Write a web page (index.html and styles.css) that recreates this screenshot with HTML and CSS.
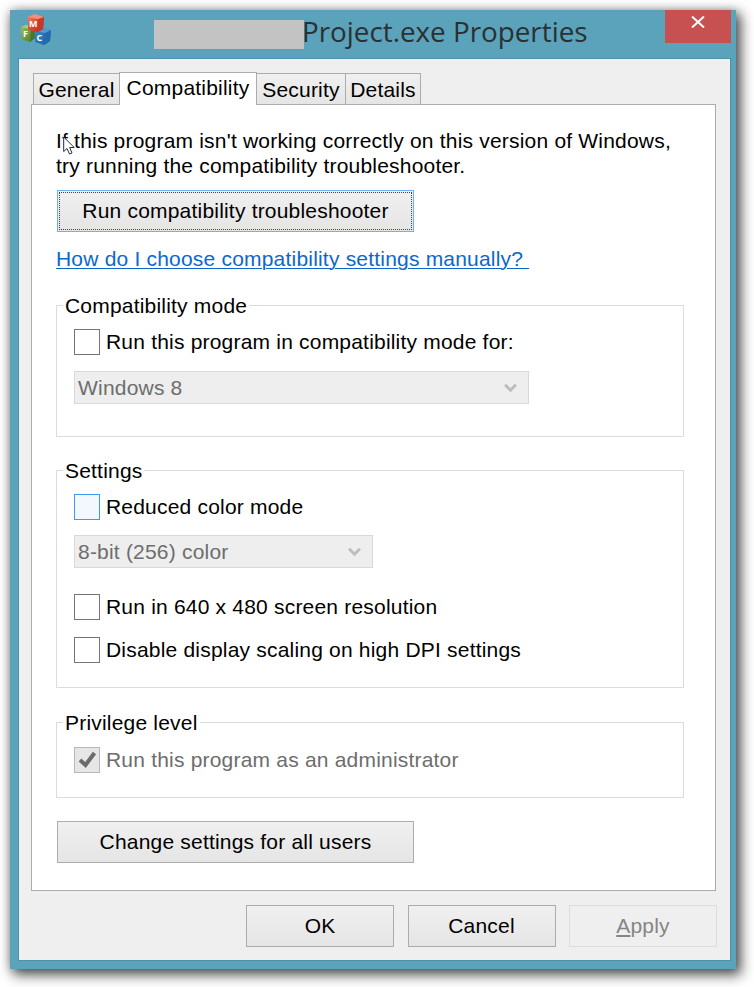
FILE: index.html
```html
<!DOCTYPE html>
<html lang="en">
<head>
<meta charset="utf-8">
<title>Project.exe Properties</title>
<link rel="stylesheet" href="styles.css">
</head>
<body>
<div class="window">
  <header class="titlebar">
    <svg class="app-icon" viewBox="0 0 32 33">
      <defs>
        <linearGradient id="red" x2="1" y2="1"><stop offset="0" stop-color="#ef8a68"/><stop offset=".5" stop-color="#d94a34"/><stop offset="1" stop-color="#b81f17"/></linearGradient>
        <linearGradient id="green" x2="1" y2="1"><stop offset="0" stop-color="#9dc064"/><stop offset="1" stop-color="#477526"/></linearGradient>
        <linearGradient id="blue" x2="1" y2="1"><stop offset="0" stop-color="#3f8dca"/><stop offset="1" stop-color="#155b9f"/></linearGradient>
      </defs>
      <path fill="url(#green)" d="M1 14L6 12L15 13V25L10 29L1 26Z"/>
      <path fill="#4b7829" d="M11 16L15 14V25L10 29Z"/>
      <path fill="#adc97b" d="M1 14L6 12L15 13L11 16Z"/>
      <path fill="url(#blue)" d="M15 18L22 15L31 17L30 28L24 32L15 29Z"/>
      <path fill="#1f6bae" d="M25 20L31 17L30 28L24 32Z"/>
      <path fill="#5098d0" d="M15 18L22 15L31 17L25 20Z"/>
      <path fill="url(#red)" d="M8 4L15 1L24 4L23 16L18 19L8 17Z"/>
      <path fill="#c8382a" d="M18 6L24 4L23 16L18 19Z"/>
      <path fill="#ef9278" d="M8 4L15 1L24 4L18 6Z"/>
      <g class="app-letters"><text x="9" y="14">M</text><text x="3" y="24">F</text><text x="16.5" y="28">C</text></g>
    </svg>
    <span class="redacted"></span>
    <h1 class="title">Project.exe Properties</h1>
    <button class="close" aria-label="Close"><svg viewBox="0 0 14 12"><path d="M1 .5L13 11.5M13 .5L1 11.5"/></svg></button>
  </header>
  <main class="client">
    <nav class="tabs">
      <span class="tab general">General</span>
      <span class="tab active">Compatibility</span>
      <span class="tab security">Security</span>
      <span class="tab details">Details</span>
    </nav>
    <section class="panel">
      <p class="intro">If this program isn't working correctly on this version of Windows,<br>try running the compatibility troubleshooter.</p>
      <button class="button wide focused">Run compatibility troubleshooter</button>
      <a class="link">How do I choose compatibility settings manually?&nbsp;</a>
      <fieldset class="group mode">
        <legend>Compatibility mode</legend>
        <label class="check"><i class="box"></i>Run this program in compatibility mode for:</label>
        <div class="select os">Windows 8<svg viewBox="0 0 12 9"><path d="M1 1.5L6 6.5L11 1.5"/></svg></div>
      </fieldset>
      <fieldset class="group settings">
        <legend>Settings</legend>
        <label class="check"><i class="box hover"></i>Reduced color mode</label>
        <div class="select color">8-bit (256) color<svg viewBox="0 0 12 9"><path d="M1 1.5L6 6.5L11 1.5"/></svg></div>
        <label class="check resolution"><i class="box"></i>Run in 640 x 480 screen resolution</label>
        <label class="check scaling"><i class="box"></i>Disable display scaling on high DPI settings</label>
      </fieldset>
      <fieldset class="group privilege">
        <legend>Privilege level</legend>
        <label class="check disabled"><i class="box"><svg viewBox="0 0 24 24"><path d="M5 12L10.5 17L19.5 5"/></svg></i>Run this program as an administrator</label>
      </fieldset>
      <button class="button wide all-users">Change settings for all users</button>
    </section>
    <footer class="actions">
      <button class="button">OK</button>
      <button class="button">Cancel</button>
      <button class="button inactive" disabled><u>A</u>pply</button>
    </footer>
  </main>
  <svg class="cursor" viewBox="0 0 12 19"><path d="M.7 1V15.5L4 12.5L6.5 18L9 17L6.7 11.5H11.2Z"/></svg>
</div>
</body>
</html>
```
FILE: styles.css
```css
* { box-sizing: border-box; }
body {
  margin: 0;
  padding: 10px;
  height: 987px;
  overflow: hidden;
  background: #fff;
  color: #000;
  font: 21px/25px "Liberation Sans", Arial, sans-serif;
  letter-spacing: .2px;
}
.window {
  position: relative;
  width: 726px;
  height: 959px;
  padding: 0 5px 8px 8px;
  background: #5ba2bb;
  box-shadow: 4px 5px 12px 1px rgba(0, 0, 0, .65), 0 0 9px rgba(0, 0, 0, .25);
}
.titlebar { display: flex; height: 48px; align-items: flex-start; }
.app-icon { width: 32px; height: 33px; margin: 3px 0 0 2px; }
.app-letters { fill: #fff; font: bold 9px "Open Sans", sans-serif; letter-spacing: 0; }
.redacted { width: 150px; height: 29px; margin: 10px 0 0 102px; background: #c3c3c3; }
.title {
  flex: 1;
  margin: 4px 0 0 -2px;
  color: #2b3033;
  font: 27.8px/34px "Open Sans", sans-serif;
  letter-spacing: 0;
  white-space: nowrap;
}
.close { width: 66px; height: 33px; padding: 0; border: 0; background: #c75050; line-height: 0; }
.close svg { width: 14px; height: 12px; margin-bottom: 9px; }
.close path { fill: none; stroke: #fff; stroke-width: 2; }
.client { height: 903px; padding: 13px 14px 0 12px; border: 1px solid #4f91a8; background: #efefef; }
.tabs { display: flex; align-items: flex-end; height: 32px; padding-left: 2px; }
.tab {
  height: 31px;
  padding-top: 3px;
  border: 1px solid #acacac;
  border-bottom: 0;
  background: linear-gradient(#f0f0f0, #e5e5e5);
  text-align: center;
  white-space: nowrap;
}
.general { width: 87px; }
.tab.active { z-index: 1; width: 138px; height: 33px; margin: 0 -1px -1px; padding-top: 2px; background: #fff; }
.security { width: 90px; }
.details { width: 76px; margin-left: -1px; }
.panel {
  display: flex;
  flex-direction: column;
  align-items: flex-start;
  height: 787px;
  padding: 23px 31px 0 24px;
  border: 1px solid #acacac;
  background: #fff;
}
.intro { margin: 0; white-space: nowrap; }
.button {
  width: 148px;
  height: 42px;
  padding: 0 0 2px;
  border: 1px solid #acacac;
  background: linear-gradient(#f0f0f0, #e5e5e5);
  color: #000;
  font: inherit;
  letter-spacing: inherit;
}
.wide { width: 357px; margin-left: 1px; }
.focused { margin-top: 12px; border-color: #6fb0f5; outline: 1px dotted #444; outline-offset: -3px; }
.link { margin-top: 14px; color: #0a68cd; text-decoration: underline; text-decoration-thickness: 1px; text-underline-offset: 2px; white-space: pre; }
.group { width: 628px; margin: 0; padding: 0 0 0 17px; border: 1px solid #dcdcdc; }
.group legend { height: 25px; margin-left: -11px; padding: 0 2px; }
.mode { height: 144px; margin-top: 22px; }
.settings { height: 230px; margin-top: 21px; }
.privilege { height: 88px; margin-top: 22px; }
.check { display: flex; align-items: flex-start; gap: 6px; height: 26px; margin-top: 11px; line-height: 26px; white-space: nowrap; }
.box { width: 26px; height: 26px; border: 1px solid #757575; background: #fff; }
.box svg { display: block; width: 24px; height: 24px; }
.box path { fill: none; stroke: #6b6b6b; stroke-width: 4; }
.box.hover { border-color: #3d99f5; background: #f3f8ff; }
.disabled { margin-top: 12px; color: #6d6d6d; }
.disabled .box { border-color: #b8b8b8; background: #e6e6e6; }
.select {
  display: flex;
  align-items: center;
  justify-content: space-between;
  height: 33px;
  padding: 0 11px 0 3px;
  border: 1px solid #d9d9d9;
  background: #eee;
  color: #6d6d6d;
}
.select svg { width: 13px; height: 10px; }
.select path { fill: none; stroke: #bcbcbc; stroke-width: 2.6; }
.os { width: 455px; margin-top: 16px; }
.color { width: 299px; margin-top: 15px; }
.resolution { margin-top: 26px; }
.scaling { margin-top: 17px; }
.all-users { margin-top: 23px; }
.actions { display: flex; justify-content: flex-end; gap: 13.5px; margin: 14px -1px 0 0; }
.inactive { border-color: #dcdcdc; background: #efefef; color: #858585; }
.cursor { position: absolute; left: 53px; top: 126px; width: 12px; height: 19px; }
.cursor path { fill: #fff; stroke: #263044; stroke-width: 1; }
```
